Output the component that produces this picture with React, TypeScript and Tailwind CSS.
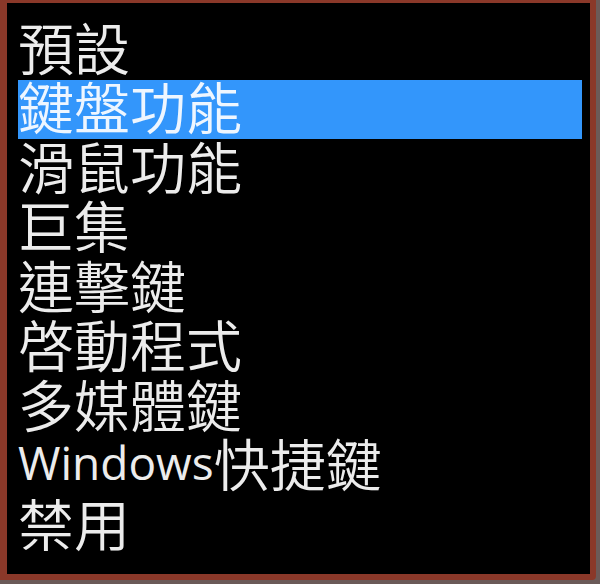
import React from "react";

const items = [
  "預設",
  "鍵盤功能",
  "滑鼠功能",
  "巨集",
  "連擊鍵",
  "啓動程式",
  "多媒體鍵",
  "Windows快捷鍵",
  "禁用",
];

export default function App() {
  return (
    <div className="w-[600px] h-[584px] bg-[#6b5a58]">
      <div className="w-[596px] h-[580px] bg-black border-t-[3px] border-l-[7px] border-r-[6px] border-b-[6px] border-[#8a3829] rounded-br-[4px] pt-[17px] pl-[11px] pr-[8px]">
        <ul className="flex flex-col">
          {items.map((it, i) => (
            <li
              key={it}
              className={
                "h-[59.5px] pb-[8px] flex items-center text-[56px] leading-[52px] font-[350] whitespace-nowrap " +
                (i === 1 ? "bg-[#3396fb] text-[#eef6ff]" : "text-[#ececec]")
              }
              style={{ fontFamily: '"Noto Sans CJK TC", "Noto Sans", sans-serif' }}
            >
              {it === "Windows快捷鍵" ? (
                <>
                  <span className="text-[46px] font-normal" style={{ fontFamily: '"Open Sans", "Noto Sans", sans-serif' }}>Windows</span>
                  <span>快捷鍵</span>
                </>
              ) : (
                it
              )}
            </li>
          ))}
        </ul>
      </div>
    </div>
  );
}
